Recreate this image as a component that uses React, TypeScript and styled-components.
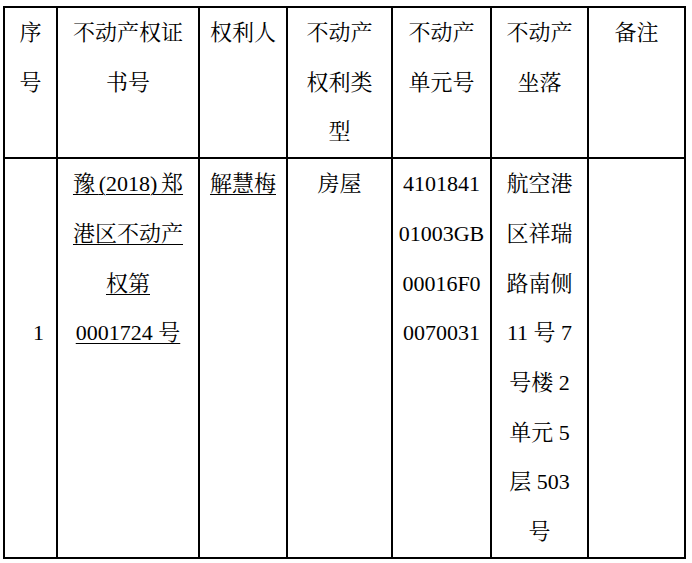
import React from "react";
import styled, { createGlobalStyle } from "styled-components";

const GlobalStyle = createGlobalStyle`
  html, body {
    margin: 0;
    padding: 0;
    background: #ffffff;
  }
`;

const Sheet = styled.div`
  display: grid;
  grid-template-columns: 53px 142px 88px 105px 99px 97px 97px;
  width: max-content;
  margin: 6px 0 0 3px;
  border-top: 2px solid #000;
  border-left: 2px solid #000;
  font-family: "Liberation Serif", "Noto Serif CJK SC", "Noto Sans CJK SC", serif;
  font-size: 22px;
  line-height: 49.7px;
  color: #000;
`;

const Cell = styled.div`
  box-sizing: border-box;
  border-right: 2px solid #000;
  border-bottom: 2px solid #000;
  text-align: center;
  min-width: 0;
`;

const NumberCell = styled(Cell)`
  display: flex;
  flex-direction: column;
  justify-content: center;
  text-align: left;
  padding-left: 28px;
`;

const Line = styled.div`
  white-space: nowrap;
`;

const Underlined = styled.span`
  text-decoration: underline;
  text-decoration-thickness: 1px;
  text-underline-offset: 3px;
`;

const Spaced = styled.span`
  letter-spacing: 3.7px;
`;

const headers: string[][] = [
  ["序", "号"],
  ["不动产权证", "书号"],
  ["权利人"],
  ["不动产", "权利类", "型"],
  ["不动产", "单元号"],
  ["不动产", "坐落"],
  ["备注"],
];

export default function App() {
  return (
    <>
      <GlobalStyle />
      <Sheet>
        {headers.map((lines, i) => (
          <Cell key={i}>
            {lines.map((t, j) => (
              <Line key={j}>{t}</Line>
            ))}
          </Cell>
        ))}

        <NumberCell>
          <Line>1</Line>
          <Line>&nbsp;</Line>
        </NumberCell>

        <Cell>
          <Line>
            <Underlined>
              <Spaced>豫</Spaced>(2018<Spaced>)</Spaced>郑
            </Underlined>
          </Line>
          <Line>
            <Underlined>港区不动产</Underlined>
          </Line>
          <Line>
            <Underlined>权第</Underlined>
          </Line>
          <Line>
            <Underlined>0001724 号</Underlined>
          </Line>
        </Cell>

        <Cell>
          <Line>
            <Underlined>解慧梅</Underlined>
          </Line>
        </Cell>

        <Cell>
          <Line>房屋</Line>
        </Cell>

        <Cell>
          {["4101841", "01003GB", "00016F0", "0070031"].map((t) => (
            <Line key={t}>{t}</Line>
          ))}
        </Cell>

        <Cell>
          {["航空港", "区祥瑞", "路南侧", "11 号 7", "号楼 2", "单元 5", "层 503", "号"].map(
            (t, i) => (
              <Line key={i}>{t}</Line>
            )
          )}
        </Cell>

        <Cell />
      </Sheet>
    </>
  );
}
